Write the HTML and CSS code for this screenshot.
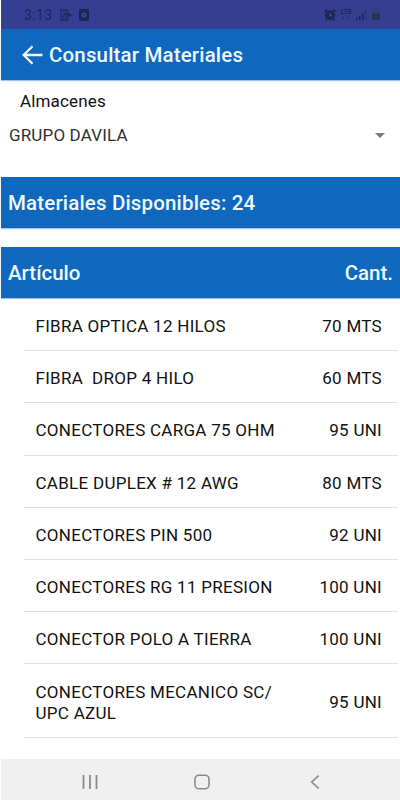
FILE: index.html
```html
<!DOCTYPE html>
<html lang="es">
<head>
  <meta charset="UTF-8">
  <meta name="viewport" content="width=device-width, initial-scale=1.0">
  <title>Consultar Materiales</title>
  <link rel="stylesheet" href="styles.css">
</head>
<body>
  <div class="app">
    <div class="status-bar">
      <span class="hora">3:13</span>
      <svg class="icon-llamada" width="12" height="12" viewBox="0 0 12 12" fill="none" stroke="currentColor" stroke-width="1.3">
        <path d="M7.5 3V1H1v10h6.500V9M3 8.500c0-3 2-3.500 4-3.500M3 3.500h2M3 8.500h3"/>
        <path d="M7 3.500l4 2.500-4 2.500z" fill="currentColor"/>
      </svg>
      <svg width="10" height="12" viewBox="0 0 10 12">
        <rect width="10" height="12" rx="1" fill="currentColor"/>
        <circle cx="5" cy="6" r="2.600" fill="#3c459a"/>
        <path d="M3.800 5l1.200 1.200L6.500 5" fill="none" stroke="currentColor"/>
      </svg>
      <div class="status-right">
        <svg width="12" height="12" viewBox="0 0 12 12">
          <path d="M.5 3L3 .5M9 .5L11.500 3M2.500 10l-1 1.500M9.500 10l1 1.500" stroke="currentColor" stroke-width="1.600"/>
          <circle cx="6" cy="6.300" r="4.900" fill="currentColor"/>
          <path d="M6 4v2.800h2.200" fill="none" stroke="#5058a0"/>
        </svg>
        <div class="lte">
          <span>LTE</span>
          <svg width="8" height="4" viewBox="0 0 8 4" fill="currentColor" opacity=".6"><path d="M0 2.500L2 .5v3zM5 1h2L6 3.500z"/></svg>
        </div>
        <svg class="senal" width="11" height="11" viewBox="0 0 11 11" fill="currentColor">
          <path d="M0 8.500h1.500V11H0zM3 6.500h1.500V11H3zM6 4h1.500v7H6z"/>
          <path d="M9 1h1.500v10H9z" opacity=".4"/>
        </svg>
        <svg width="8" height="11" viewBox="0 0 8 11">
          <path d="M0 2h2V0h4v2h2v3H0z" fill="#343d75"/>
          <path d="M0 4.500h8V11H0z" fill="#2a354f"/>
        </svg>
      </div>
    </div>

    <header class="barra titulo">
      <svg width="21" height="20" viewBox="0 0 21 20" fill="none" stroke="currentColor" stroke-width="2.300">
        <path d="M20.500 10H2M10.500 1.300L1.700 10l8.800 8.700"/>
      </svg>
      <h1>Consultar Materiales</h1>
    </header>

    <div class="almacenes">
      <label class="etiqueta">Almacenes</label>
      <div class="selector">
        <span>GRUPO DAVILA</span>
        <svg width="10" height="5" viewBox="0 0 10 5"><path d="M0 0h10L5 5z" fill="#7b7b7b"/></svg>
      </div>
    </div>

    <div class="barra disponibles">Materiales Disponibles: 24</div>

    <div class="barra cabecera">
      <span>Artículo</span>
      <span>Cant.</span>
    </div>

    <ul class="lista">
      <li><span class="articulo">FIBRA OPTICA 12 HILOS</span><span>70 MTS</span></li>
      <li><span class="articulo">FIBRA  DROP 4 HILO</span><span>60 MTS</span></li>
      <li><span class="articulo">CONECTORES CARGA 75 OHM</span><span>95 UNI</span></li>
      <li><span class="articulo">CABLE DUPLEX # 12 AWG</span><span>80 MTS</span></li>
      <li><span class="articulo">CONECTORES PIN 500</span><span>92 UNI</span></li>
      <li><span class="articulo">CONECTORES RG 11 PRESION</span><span>100 UNI</span></li>
      <li><span class="articulo">CONECTOR POLO A TIERRA</span><span>100 UNI</span></li>
      <li><span class="articulo">CONECTORES MECANICO SC/<br>UPC AZUL</span><span>95 UNI</span></li>
    </ul>

    <nav class="nav-bar">
      <svg width="16" height="16" viewBox="0 0 16 16" stroke="currentColor" stroke-width="1.800"><path d="M1.500 1v14M8 1v14M14.500 1v14"/></svg>
      <svg class="inicio" width="16" height="16" viewBox="0 0 16 16" fill="none" stroke="currentColor" stroke-width="1.600"><rect x="1" y="1.200" width="14" height="13.600" rx="4"/></svg>
      <svg width="10" height="16" viewBox="0 0 10 16" fill="none" stroke="currentColor" stroke-width="1.600"><path d="M8.700 1.700L1.700 8l7 6.300"/></svg>
    </nav>
  </div>
</body>
</html>
```

FILE: styles.css
```css
body {
  margin: 0;
  background-color: #fff;
  font-family: Roboto, "Liberation Sans", sans-serif;
  color: #111;
}
.app {
  box-sizing: border-box;
  height: 800px;
  padding-left: 1px;
  display: flex;
  flex-direction: column;
  overflow: hidden;
}
.status-bar {
  height: 29px;
  padding: 0 20px 0 23px;
  box-sizing: border-box;
  display: flex;
  align-items: center;
  background-color: #353f92;
  color: #1d2556;
}
.hora {
  width: 36px;
  font-size: 14px;
  letter-spacing: 0.4px;
}
.icon-llamada {
  margin-right: 7px;
  opacity: 0.8;
}
.status-right {
  margin-left: auto;
  display: flex;
  align-items: center;
}
.lte {
  margin: 0 4px 0 5px;
  display: flex;
  flex-direction: column;
  align-items: center;
  font-size: 7px;
  font-weight: 700;
  line-height: 7px;
}
.senal {
  margin-right: 5px;
}
.barra {
  height: 51px;
  box-sizing: border-box;
  padding: 0 7px 0 7px;
  display: flex;
  align-items: center;
  background-color: #0f67be;
  color: #ecfaff;
  font-size: 20.5px;
  font-weight: 500;
  letter-spacing: 0.16px;
  box-shadow: 0 1px 1px rgba(15, 103, 190, 0.4);
}
.titulo {
  padding-left: 21px;
}
.titulo h1 {
  margin: 1px 0 0 6px;
  font-size: 20.5px;
  font-weight: 500;
}
.disponibles {
  padding-top: 1px;
}
.almacenes {
  height: 97px;
  font-size: 17px;
  letter-spacing: 0.15px;
}
.etiqueta {
  display: block;
  padding: 11px 0 0 19px;
  line-height: 20px;
}
.selector {
  display: flex;
  align-items: center;
  justify-content: space-between;
  padding: 14px 15px 0 8px;
  line-height: 20px;
  color: #303030;
}
.cabecera {
  margin-top: 19px;
  padding-top: 1px;
  justify-content: space-between;
  font-size: 20.5px;
  letter-spacing: 0;
}
.lista {
  list-style: none;
  margin: 0;
  padding: 1px 2px 0 23px;
  font-size: 17px;
  line-height: 21px;
  letter-spacing: 0.28px;
}
.lista li {
  box-sizing: border-box;
  height: 52.2px;
  padding: 4px 16px 0 11.5px;
  display: flex;
  align-items: center;
  justify-content: space-between;
  border-bottom: 1px solid #e0e0e0;
}
.lista li:last-child {
  height: 73.4px;
}
.articulo {
  white-space: pre;
}
.nav-bar {
  height: 41px;
  margin-top: auto;
  padding: 4px 80px 0 81px;
  display: flex;
  align-items: center;
  justify-content: space-between;
  box-sizing: border-box;
  background-color: #f0f0f0;
  color: #8b8b8b;
}
.inicio {
  margin-right: 5px;
}
```
